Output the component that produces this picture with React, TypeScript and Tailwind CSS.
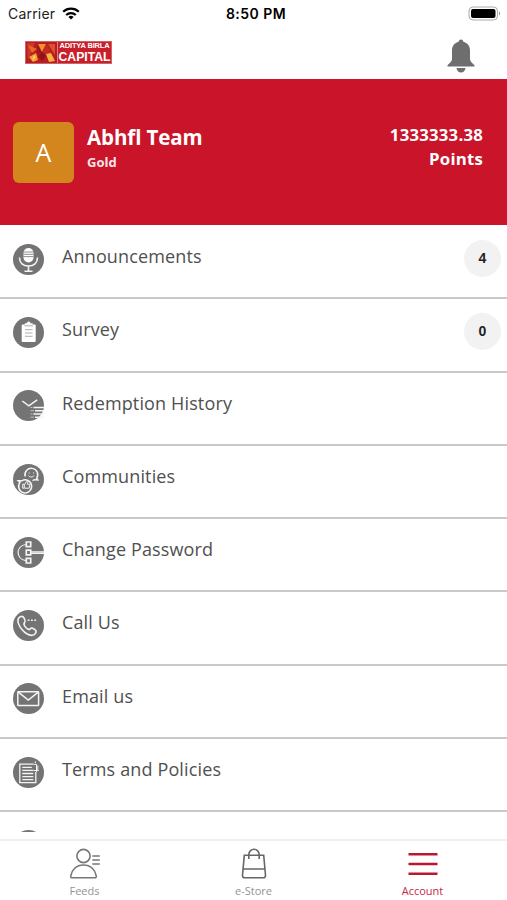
import type { ReactNode } from "react";

interface MenuItem {
  label: string;
  icon: ReactNode;
  badge?: number;
}

const MicIcon = () => (
  <>
    <rect x="10.5" y="4" width="10" height="14.5" rx="5" fill="#fff" stroke="none" />
    <path d="M10.5 8h10M10.5 10.3h10M10.5 12.6h10" stroke="#747474" strokeWidth="0.8" />
    <path d="M6.5 13.5c0 5.5 3.6 8.5 9 8.5s9-3 9-8.5M15.5 22.5v5M11.5 27.3h8" strokeWidth="1.6" />
  </>
);

const ClipboardIcon = () => (
  <>
    <rect x="8.7" y="7.5" width="14" height="17.5" rx="1" fill="#fff" stroke="none" />
    <path d="M12 8V6.5h2a1.7 1.7 0 0 1 3.4 0h2V8z" fill="#fff" strokeWidth="0.6" />
    <path d="M11.5 8.8h8.4M12 12.7h7.6M12 16h7.6M12 19.3h7.6" stroke="#999" strokeWidth="0.8" />
  </>
);

const HistoryIcon = () => (
  <>
    <path d="M9.3 11l6.5 4.8 8.4-6" strokeWidth="1.5" />
    <path d="M20.5 17.5H31M22 20.7H31M20.5 24H31M22 27.2H31" strokeWidth="1.5" />
    <path d="M17.5 17.5h2M17.5 20.7h3.5M17.5 24h2M17.5 27.2h3.5" strokeWidth="1" opacity="0.6" />
  </>
);

const CommunityIcon = () => (
  <>
    <path d="M12.2 12.5a6.4 6.4 0 1 1 11.5 1.7l1.1 1.7-3-.2a6.4 6.4 0 0 1-2.3.8" strokeWidth="1.5" />
    <path d="M7 18.4l-1.7-1.6h3.5a6.5 6.5 0 1 1-1.8 1.6z" strokeWidth="1.5" />
    <path d="M16.2 8.5v1M20.5 8.5v1M15.5 11.5c1 2 4.5 2 5.5 0" strokeWidth="1" />
    <path d="M9.7 20.2h1.6v4H9.7zM11.6 20.7l2-3.3c1.5 0 1 1.7.7 2.8h2.6l-.7 4h-4.6" strokeWidth="1" />
  </>
);

const PasswordIcon = () => (
  <>
    <path d="M13 7.5C2.5 9 2.5 22 13 23.7M18 14.8h13M18 16.4h13" strokeWidth="1.2" />
    <path d="M13.3 5h4.4v4.6h-4.4zM13.3 13.2h4.4v4.6h-4.4zM13.3 21.4h4.4V26h-4.4z" strokeWidth="1.7" />
  </>
);

const CallIcon = () => (
  <>
    <path
      d="M7.7 6.6c1.5-.7 2.6 0 3.4 1.5.8 1.6 1.8 2.9.6 4.2-1.500 1.400-1 2.300.2 4.100 1.200 1.700 2.700 2.800 3.800 3.200 1.200.4 1.700-1.900 3.300-1.500 1.500.5 3.700 2 4.100 3 .4 1.800-1.900 4-3.800 4.200-3 .3-7.200-2-10.300-5.700C6 15.800 4.600 12 5 9.500c.2-1.300 1.400-2.400 2.700-2.900z"
      strokeWidth="1.6"
    />
    <path d="M14.7 10.3h1.8M18 10.3h1.8M21.3 10.3h1.8" strokeWidth="1.4" />
  </>
);

const MailIcon = () => (
  <>
    <rect x="4.8" y="8.7" width="20.8" height="13.8" rx="0.5" strokeWidth="1.5" />
    <path d="M5.3 9.2l10 7.8 10-7.8" strokeWidth="1.5" />
  </>
);

const PolicyIcon = () => (
  <>
    <path d="M22.8 15v10.7H6.8V7.2h14" strokeWidth="1.3" />
    <path d="M9.3 10.3h9.500M9.300 13.400h11M9.300 16.500h11M9.300 19.600h11M9.300 22.700h11" strokeWidth="1.3" />
    <path d="M22.300 4.300v2M21.300 7.500h2.200v7.500M20.500 13.500h5M24.800 8.500v5.500" strokeWidth="1" />
  </>
);

const menuItems: MenuItem[] = [
  { label: "Announcements", icon: <MicIcon />, badge: 4 },
  { label: "Survey", icon: <ClipboardIcon />, badge: 0 },
  { label: "Redemption History", icon: <HistoryIcon /> },
  { label: "Communities", icon: <CommunityIcon /> },
  { label: "Change Password", icon: <PasswordIcon /> },
  { label: "Call Us", icon: <CallIcon /> },
  { label: "Email us", icon: <MailIcon /> },
  { label: "Terms and Policies", icon: <PolicyIcon /> },
  { label: "", icon: null },
];

const MenuRow = ({ label, icon, badge }: MenuItem) => (
  <li className="flex h-[73.3px] shrink-0 items-start border-b-2 border-[#c9c9c9] pr-1.5 pl-[13px]">
    <svg viewBox="0 0 31 31" className="mt-[17.7px] size-[31px] shrink-0" fill="none" stroke="#f4f4f4">
      <circle cx="15.5" cy="15.5" r="15.5" fill="#747474" stroke="none" />
      {icon}
    </svg>
    <span className="mt-[18px] ml-[18px] flex-1 text-[18px] leading-6 tracking-[0.14px] text-[#505050]">
      {label}
    </span>
    {badge !== undefined && (
      <span className="mt-[14px] flex size-[37px] items-center justify-center rounded-full bg-[#f2f2f2] font-['Liberation_Sans',sans-serif] text-[14px] font-bold text-[#222]">
        {badge}
      </span>
    )}
  </li>
);

const StatusBar = () => (
  <div className="grid h-7 grid-cols-3 items-center pr-[6px] pb-[2px] pl-[8px] font-['Inter','Liberation_Sans',sans-serif] text-black">
    <div className="flex items-center gap-[7px]">
      <span className="text-[14px] tracking-[0.2px] text-[#222]">Carrier</span>
      <svg viewBox="0 0 18 13" className="h-[13px] w-[18px]" fill="none" stroke="#000" strokeWidth="2.2">
        <path d="M1.2 4.8a11.2 11.2 0 0 1 15.6 0M4.2 8a7 7 0 0 1 9.6 0" />
        <path d="M9 12.5L6.4 10a3.8 3.8 0 0 1 5.2 0z" fill="#000" stroke="none" />
      </svg>
    </div>
    <span className="pl-[3px] text-center text-[14px] font-semibold tracking-[0.45px]">8:50 PM</span>
    <svg viewBox="0 0 33 15" className="h-[15px] w-[33px] justify-self-end">
      <rect x="1" y="1" width="28.5" height="13" rx="4" fill="#fff" stroke="#aaa" />
      <rect x="3" y="3" width="24.5" height="9" rx="2" fill="#000" />
      <path d="M31 5.5c1.5.5 1.5 3.5 0 4z" fill="#999" />
    </svg>
  </div>
);

const Logo = () => (
  <div className="flex h-[23px] w-[87px] border border-[#cf6465] bg-[#c91f2b]">
    <svg viewBox="0 0 31 21" className="h-[21px] w-[31px] shrink-0">
      <path d="M0 0h31v21H0z" fill="#b51e22" />
      <path d="M1 1h8l-7 17z" fill="#cf3824" />
      <path d="M2 3l9 4-5 4z" fill="#e9672a" />
      <path d="M3 15l7-4 2 7-5 2z" fill="#f5a033" />
      <path d="M11 2l5 8-5 2z" fill="#9c171b" />
      <path d="M12 2h8l-4 8z" fill="#f4902d" />
      <path d="M16 10l5-8 4 9-5 1z" fill="#c32a22" />
      <path d="M12 14l4-4 4 4-4 5z" fill="#8c1518" />
      <path d="M20 12l5-1 4 8-6 1z" fill="#f8b43a" />
      <path d="M22 2h7v11z" fill="#e0502a" />
      <path d="M8 13l2 2-4 4z" fill="#fdd55a" />
    </svg>
    <div className="flex w-[54px] flex-col items-center border-l border-[#e07c7d] font-['Liberation_Sans',sans-serif] font-bold whitespace-nowrap text-white">
      <span className="h-[9px] text-[7.5px] leading-[8px] tracking-[-0.15px]">ADITYA BIRLA</span>
      <span className="h-3 text-[12.2px] leading-[13px]">CAPITAL</span>
    </div>
  </div>
);

const Bell = () => (
  <svg viewBox="0 0 28 34" className="h-[34px] w-7" fill="#6e6e6e">
    <path d="M14 .5c-1.5 0-2.3 1-2.3 2.3C7.5 4 5 7 5 11.5v8C5 23 2.5 24 .5 26.2V27.5h27v-1.3C25.5 24 23 23 23 19.5v-8C23 7 20.5 4 16.3 2.8 16.3 1.5 15.5.5 14 .5z" />
    <path d="M9.5 29h9c-.3 2.6-2 4.5-4.5 4.5S9.8 31.6 9.5 29z" />
  </svg>
);

const ProfileCard = () => (
  <section className="flex h-[146px] shrink-0 items-start bg-[#c91429] pr-[24px] pl-[13px] text-white">
    <div className="mt-[43px] flex size-[61px] items-center justify-center rounded-md bg-[#d3861d] text-[25px]">
      A
    </div>
    <div className="mt-[44px] ml-[13px] flex-1">
      <h1 className="text-[20.5px] leading-7 font-bold tracking-[-0.1px]">Abhfl Team</h1>
      <p className="mt-px text-[13px] leading-5 font-bold text-[#fbe4e6]">Gold</p>
    </div>
    <p className="mt-[43.5px] w-24 text-right text-[16.8px] leading-6 font-bold tracking-[0.2px]">
      1333333.38 Points
    </p>
  </section>
);

const TabBar = () => (
  <nav className="grid h-[61px] shrink-0 grid-cols-3 border-t-2 border-[#efefef] text-center text-[11px] leading-4 text-[#949494]">
    <div className="flex flex-col items-center pt-[7px]">
      <svg viewBox="0 0 32 32" className="h-8 w-8" fill="none" stroke="#777" strokeWidth="1.6">
        <circle cx="14.5" cy="8" r="6.6" />
        <path d="M1.7 28c1-6 5.5-11 12.8-11s11.8 5 12.8 11c.2 1-.4 1.8-1.3 1.8H3c-.9 0-1.5-.8-1.3-1.8z" />
        <path d="M23.3 8h7.5M23.3 12h7.5M23.3 16h7.5" />
      </svg>
      <span className="mt-[3px]">Feeds</span>
    </div>
    <div className="flex flex-col items-center pt-[7px]">
      <svg viewBox="0 0 26 32" className="h-8 w-[26px]" fill="none" stroke="#666" strokeWidth="1.6">
        <path d="M3.3 7.3h19.4l1.8 20c.1 1.6-.8 2.5-2.2 2.5H3.7c-1.4 0-2.3-.9-2.2-2.5z" />
        <path d="M2 21h22M7.8 11V6.5a5.2 5.2 0 0 1 10.4 0V11" />
      </svg>
      <span className="mt-[3px]">e-Store</span>
    </div>
    <div className="flex flex-col items-center pt-[7px] text-[#c72941]">
      <svg viewBox="0 0 30 32" className="h-8 w-[30px]" fill="none" stroke="#bd1730" strokeWidth="2.6">
        <path d="M.5 6.200h29M.5 16h29M.5 25.800h29" />
      </svg>
      <span className="mt-[3px]">Account</span>
    </div>
  </nav>
);

export default function App() {
  return (
    <div className="flex h-[900px] w-full flex-col overflow-hidden bg-white font-['Open_Sans','Noto_Sans',sans-serif]">
      <StatusBar />
      <header className="flex h-[51px] shrink-0 items-start justify-between pr-[32px] pl-[25px]">
        <div className="mt-[13px]">
          <Logo />
        </div>
        <div className="mt-[11px]">
          <Bell />
        </div>
      </header>
      <ProfileCard />
      <ul className="mb-[7px] flex min-h-0 flex-1 flex-col overflow-hidden pt-px">
        {menuItems.map((item, idx) => (
          <MenuRow key={idx} {...item} />
        ))}
      </ul>
      <TabBar />
    </div>
  );
}
